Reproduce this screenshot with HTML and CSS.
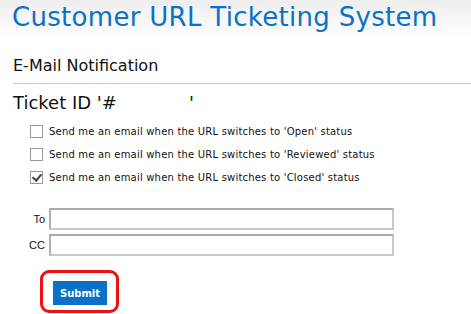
FILE: index.html
```html
<!DOCTYPE html>
<html lang="en">
<head>
  <meta charset="UTF-8">
  <title>Customer URL Ticketing System</title>
  <link rel="stylesheet" href="styles.css">
</head>
<body>

  <div class="header">
    <h1>Customer URL Ticketing System</h1>
  </div>

  <div class="content">
    <h2>E-Mail Notification</h2>

    <h3>Ticket ID '#<span class="ticket-id"></span>'</h3>

    <!-- Status options -->
    <div class="options">
      <label class="option"><input type="checkbox"> Send me an email when the URL switches to 'Open' status</label>
      <label class="option"><input type="checkbox"> Send me an email when the URL switches to 'Reviewed' status</label>
      <label class="option"><input type="checkbox" checked> Send me an email when the URL switches to 'Closed' status</label>
    </div>

    <!-- Recipients -->
    <div class="recipients">
      <div class="field"><label for="toField">To</label><input id="toField" type="text"></div>
      <div class="field"><label for="ccField">CC</label><input id="ccField" type="text"></div>
    </div>

    <div class="submit-wrap">
      <div class="highlight">
        <button class="submit">Submit</button>
      </div>
    </div>
  </div>

</body>
</html>
```

FILE: styles.css
```css
* {
  margin: 0;
  padding: 0;
  box-sizing: border-box;
}

body {
  font-family: "DejaVu Sans", Verdana, sans-serif;
  background: #fff;
  color: #222;
}

.header {
  height: 44px;
  padding: 2px 0 0 12px;
  background: linear-gradient(#eeeeee, #ffffff 40px);
}

h1 {
  font-size: 26px;
  font-weight: normal;
  color: #0a72c6;
  letter-spacing: 0.3px;
}

.content {
  padding-left: 13px;
}

h2 {
  font-size: 16px;
  font-weight: normal;
  color: #111;
  padding: 12px 0 8px;
  border-bottom: 1px solid #cccccc;
}

h3 {
  font-size: 18px;
  font-weight: normal;
  color: #111;
  padding-top: 8px;
}

.ticket-id {
  display: inline-block;
  width: 72px;
}

.options {
  padding: 7px 0 0 17px;
}

.option {
  display: flex;
  align-items: center;
  gap: 6px;
  height: 23px;
  font-size: 10px;
  letter-spacing: 0.2px;
  color: #111;
}

/* old-style flat grey checkbox */
.option input {
  appearance: none;
  -webkit-appearance: none;
  position: relative;
  width: 13px;
  height: 13px;
  margin: 0;
  border: 1px solid #999;
  background: #fff;
}

.option input:checked::after {
  content: "";
  position: absolute;
  left: 3px;
  top: 0px;
  width: 4px;
  height: 7px;
  border: solid #444;
  border-width: 0 2px 2px 0;
  transform: rotate(40deg);
}

.recipients {
  padding-top: 19px;
}

.field {
  display: flex;
  align-items: center;
  margin-bottom: 4px;
}

.field label {
  width: 36px;
  text-align: right;
  padding-right: 4px;
  font-family: "Liberation Sans", Arial, sans-serif;
  font-size: 11px;
  color: #111;
}

.field input {
  width: 345px;
  height: 22px;
  border: 2px solid #c8c8c8;
  border-top-color: #aaa;
  border-left-color: #b0b0b0;
}

.submit-wrap {
  padding: 10px 0 0 27px;
}

.highlight {
  display: inline-block;
  padding: 8px 9px 5px 10px;
  border: 3px solid #ee1111;
  border-radius: 9px;
}

.submit {
  display: block;
  width: 54px;
  height: 24px;
  border: none;
  background: #0a72c6;
  color: #fff;
  font-family: "DejaVu Sans", Verdana, sans-serif;
  font-size: 10px;
  font-weight: bold;
}
```
